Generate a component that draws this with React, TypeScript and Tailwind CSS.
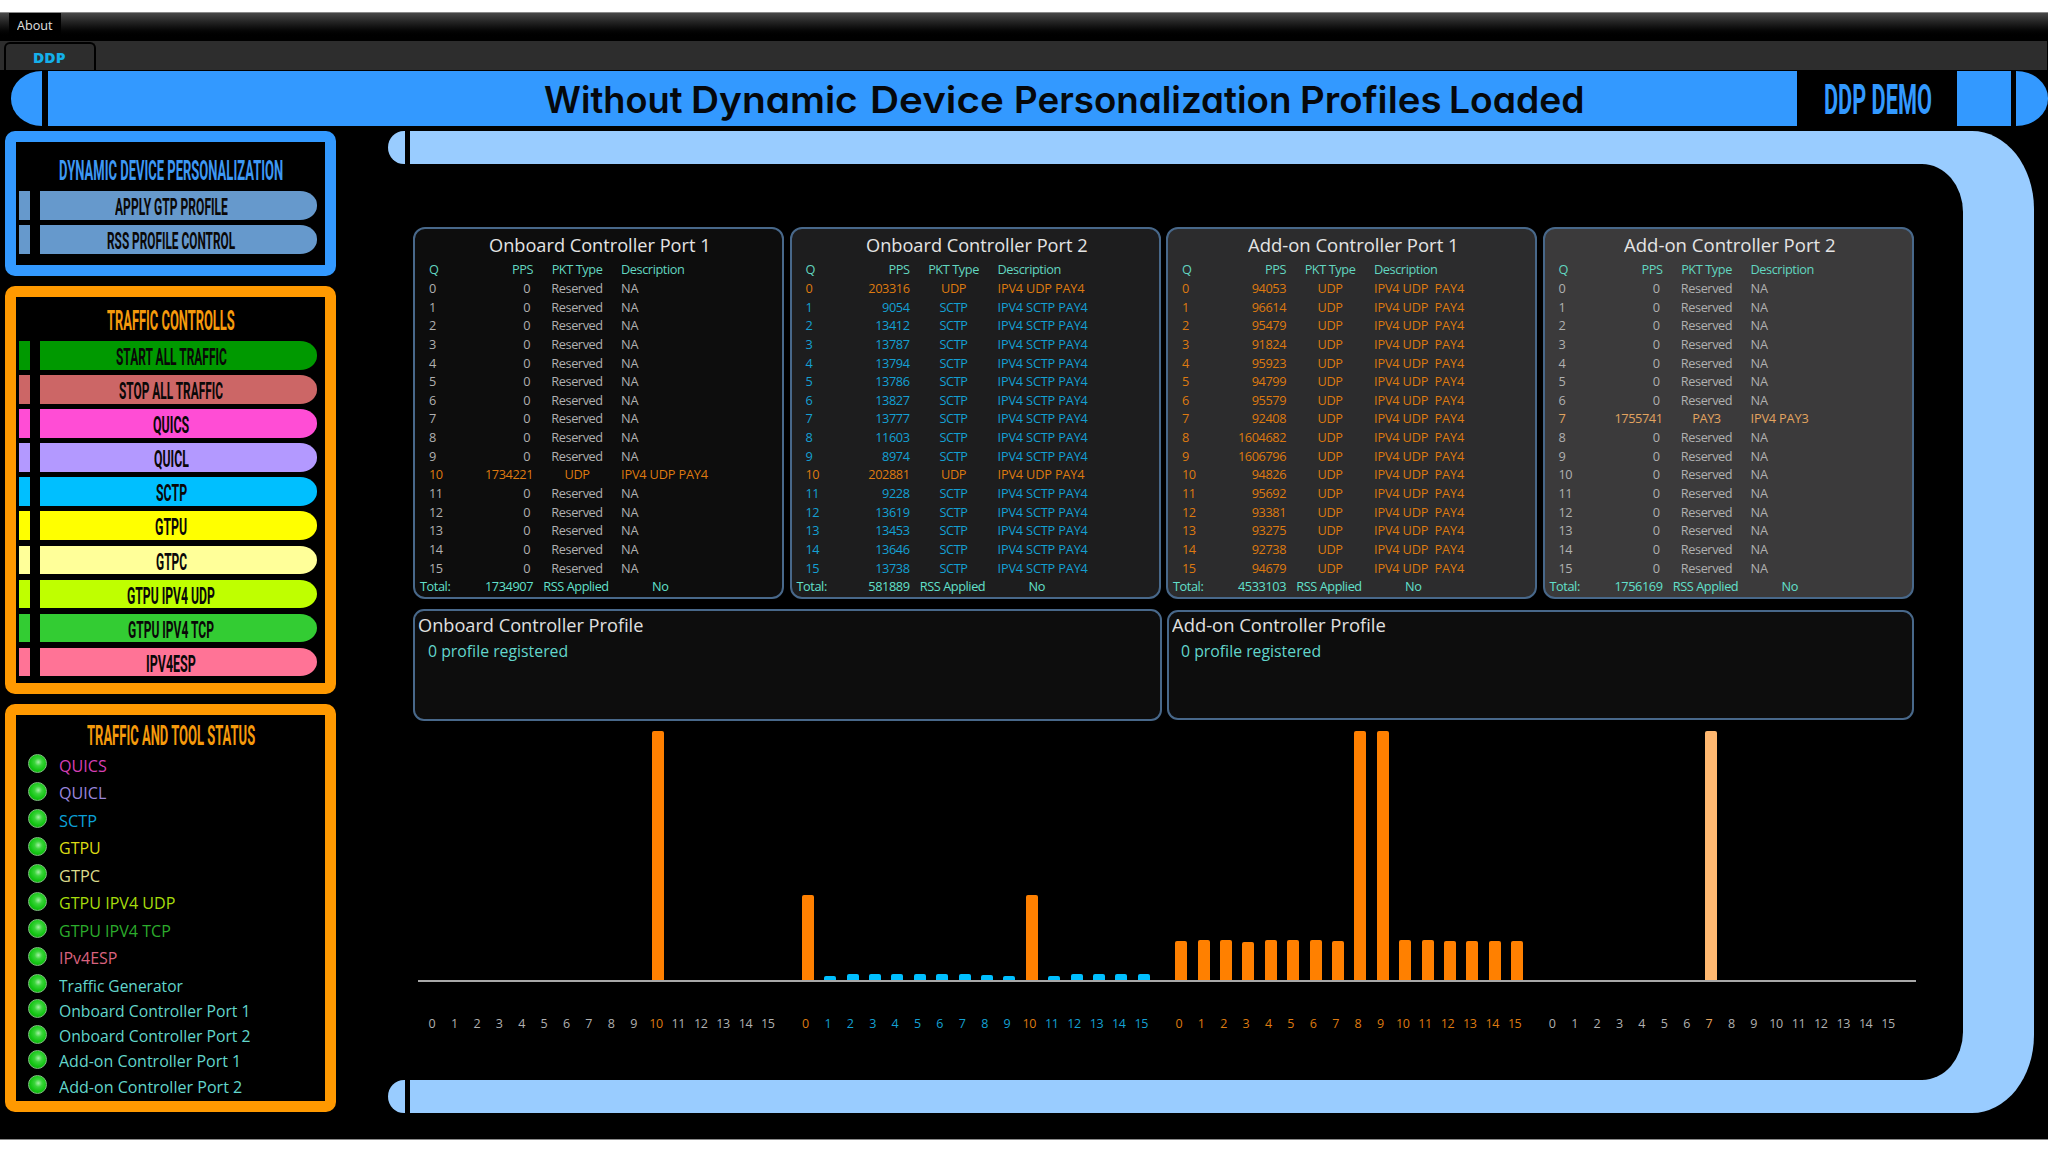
import { useLayoutEffect, useRef, useState } from 'react';
import type { ReactNode } from 'react';
import clsx from 'clsx';

type Kind = 'none' | 'udp' | 'sctp' | 'pay3';

interface Queue {
  pps: number;
  kind: Kind;
}

interface Port {
  name: string;
  nameWidth: number;
  bg: string;
  total: number;
  udpLabel: string;
  queues: Queue[];
}

const textColor: Record<Kind, string> = {
  none: 'text-[#b0b0b0]',
  udp: 'text-[#de7a10]',
  sctp: 'text-[#14a0d4]',
  pay3: 'text-[#e2a460]',
};

const barColor: Record<Kind, string> = {
  none: 'bg-transparent',
  udp: 'bg-[#ff8000]',
  sctp: 'bg-[#00bfff]',
  pay3: 'bg-[#ffb870]',
};

const idle = (): Queue[] => Array.from({ length: 16 }, () => ({ pps: 0, kind: 'none' as Kind }));

const withQueue = (index: number, queue: Queue) => idle().map((q, i) => (i === index ? queue : q));

const ports: Port[] = [
  {
    name: 'Onboard Controller Port 1',
    nameWidth: 222,
    bg: 'bg-[#0d0d0d]',
    total: 1734907,
    udpLabel: 'IPV4 UDP PAY4',
    queues: withQueue(10, { pps: 1734221, kind: 'udp' }),
  },
  {
    name: 'Onboard Controller Port 2',
    nameWidth: 222,
    bg: 'bg-[#1d1d1e]',
    total: 581889,
    udpLabel: 'IPV4 UDP PAY4',
    queues: [
      203316, 9054, 13412, 13787, 13794, 13786, 13827, 13777, 11603, 8974, 202881, 9228, 13619, 13453, 13646, 13738,
    ].map((pps) => ({ pps, kind: pps > 200000 ? 'udp' : 'sctp' })),
  },
  {
    name: 'Add-on Controller Port 1',
    nameWidth: 211,
    bg: 'bg-[#2c2c2d]',
    total: 4533103,
    udpLabel: 'IPV4 UDP\u00a0 PAY4',
    queues: [
      94053, 96614, 95479, 91824, 95923, 94799, 95579, 92408, 1604682, 1606796, 94826, 95692, 93381, 93275, 92738,
      94679,
    ].map((pps) => ({ pps, kind: 'udp' })),
  },
  {
    name: 'Add-on Controller Port 2',
    nameWidth: 212,
    bg: 'bg-[#3b3a3b]',
    total: 1756169,
    udpLabel: 'IPV4 UDP PAY4',
    queues: withQueue(7, { pps: 1755741, kind: 'pay3' }),
  },
];

const headline = [
  { word: 'Without', width: 138, gap: 'ml-0' },
  { word: 'Dynamic', width: 167, gap: 'ml-[8.5px]' },
  { word: 'Device', width: 134, gap: 'ml-[12px]' },
  { word: 'Personalization', width: 277, gap: 'ml-[10px]' },
  { word: 'Profiles', width: 141, gap: 'ml-[9.5px]' },
  { word: 'Loaded', width: 136, gap: 'ml-[8px]' },
];

const profileButtons = [
  { label: 'APPLY GTP PROFILE', width: 113, color: 'bg-[#6699cc]' },
  { label: 'RSS PROFILE CONTROL', width: 128, color: 'bg-[#6699cc]' },
];

const trafficButtons = [
  { label: 'START ALL TRAFFIC', width: 111, color: 'bg-[#009900]' },
  { label: 'STOP ALL TRAFFIC', width: 104, color: 'bg-[#cc6666]' },
  { label: 'QUICS', width: 36, color: 'bg-[#ff4dd5]' },
  { label: 'QUICL', width: 35, color: 'bg-[#b399ff]' },
  { label: 'SCTP', width: 31, color: 'bg-[#00bfff]' },
  { label: 'GTPU', width: 32, color: 'bg-[#ffff00]' },
  { label: 'GTPC', width: 31, color: 'bg-[#ffff99]' },
  { label: 'GTPU IPV4 UDP', width: 88, color: 'bg-[#bfff00]' },
  { label: 'GTPU IPV4 TCP', width: 86, color: 'bg-[#33cc33]' },
  { label: 'IPV4ESP', width: 50, color: 'bg-[#ff7396]' },
];

const statuses = [
  { label: 'QUICS', width: 48, color: 'text-[#d63fb4]' },
  { label: 'QUICL', width: 47, color: 'text-[#9a86dc]' },
  { label: 'SCTP', width: 38, color: 'text-[#0ca0d8]' },
  { label: 'GTPU', width: 42, color: 'text-[#dcdc14]' },
  { label: 'GTPC', width: 41, color: 'text-[#dcdc8c]' },
  { label: 'GTPU IPV4 UDP', width: 116, color: 'text-[#a6dc0c]' },
  { label: 'GTPU IPV4 TCP', width: 112, color: 'text-[#2cac2c]' },
  { label: 'IPv4ESP', width: 58, color: 'text-[#d8627e]' },
  { label: 'Traffic Generator', width: 124, color: 'text-[#62d6cc]' },
  { label: 'Onboard Controller Port 1', width: 192, color: 'text-[#62d6cc]' },
  { label: 'Onboard Controller Port 2', width: 192, color: 'text-[#62d6cc]' },
  { label: 'Add-on Controller Port 1', width: 182, color: 'text-[#62d6cc]' },
  { label: 'Add-on Controller Port 2', width: 183, color: 'text-[#62d6cc]' },
];

// Squeezes or stretches one line of text to a fixed width
function Fit({ width, className, children }: { width: number; className?: string; children: ReactNode }) {
  const ref = useRef<HTMLSpanElement>(null);
  const [scale, setScale] = useState(1);

  useLayoutEffect(() => {
    if (ref.current) setScale(width / ref.current.offsetWidth);
  }, [width]);

  return (
    <span className={clsx('block whitespace-nowrap', className)} style={{ width }}>
      <span ref={ref} className="inline-block origin-left" style={{ transform: `scaleX(${scale})` }}>
        {children}
      </span>
    </span>
  );
}

function PillButton({ label, width, color }: { label: string; width: number; color: string }) {
  return (
    <button className="relative flex h-[28.5px] w-[298px] gap-2.5">
      <span className={clsx('w-[11px]', color)} />
      <span className={clsx('flex-1 rounded-r-[17px_14px]', color)} />
      <span className="absolute inset-0 right-[-6px] top-[5px] flex items-center justify-center">
        <Fit width={width} className="font-['Roboto'] text-[23.5px] leading-none font-bold text-[#0a0808]">
          {label}
        </Fit>
      </span>
    </button>
  );
}

function SidePanel({
  title,
  titleWidth,
  className,
  children,
}: {
  title: string;
  titleWidth: number;
  className: string;
  children: ReactNode;
}) {
  return (
    <section className={clsx('flex flex-col rounded-[10px] border-[11px] bg-black', className)}>
      <Fit width={titleWidth} className="mx-auto font-['Roboto'] text-[27px] leading-[28px] font-bold">
        {title}
      </Fit>
      {children}
    </section>
  );
}

function Led() {
  return (
    <span className="block h-[19px] w-[19px] rounded-full border border-[#7fc47f] bg-[radial-gradient(circle_at_55%_42%,#a4f0a4_0%,#3ad43a_28%,#12c412_60%,#0f9c0f_100%)]" />
  );
}

const gridCols = 'grid h-[18.67px] grid-cols-[50px_54px_88px_1fr] items-center pl-[14px]';

function PortPanel({ port }: { port: Port }) {
  const describe = (kind: Kind) => {
    if (kind === 'udp') return ['UDP', port.udpLabel];
    if (kind === 'sctp') return ['SCTP', 'IPV4 SCTP PAY4'];
    if (kind === 'pay3') return ['PAY3', 'IPV4 PAY3'];
    return ['Reserved', 'NA'];
  };

  return (
    <section
      className={clsx(
        'h-[372px] w-[371px] rounded-[12px] border-2 border-[#48688a] text-[12.75px] leading-[18px] tracking-[-0.43px]',
        port.bg,
      )}
    >
      <h2 className="flex h-[30.9px] items-center justify-center pt-px pl-[3px] text-[19px] tracking-normal text-[#e4e4e4]">
        <Fit width={port.nameWidth}>{port.name}</Fit>
      </h2>
      <div className={clsx(gridCols, 'text-[#62d6c0]')}>
        <span>Q</span>
        <span className="text-right">PPS</span>
        <span className="text-center">PKT Type</span>
        <span>Description</span>
      </div>
      {port.queues.map((q, i) => {
        const [type, description] = describe(q.kind);
        return (
          <div key={i} className={clsx(gridCols, textColor[q.kind])}>
            <span>{i}</span>
            <span className={clsx('text-right', q.pps === 0 && 'pr-[3px]')}>{q.pps}</span>
            <span className="text-center">{type}</span>
            <span className="tracking-[-0.17px]">{description}</span>
          </div>
        );
      })}
      <div className={clsx(gridCols, 'text-[#62e0cc]')}>
        <span className="-ml-[9px]">Total:</span>
        <span className="text-right">{port.total}</span>
        <span className="-ml-[2px] text-center">RSS Applied</span>
        <span className="pl-[31px]">No</span>
      </div>
    </section>
  );
}

function ProfilePanel({ title, titleWidth, className }: { title: string; titleWidth: number; className: string }) {
  return (
    <section className={clsx('rounded-[11px] border-2 border-[#48688a] bg-[#0d0d0d]', className)}>
      <Fit width={titleWidth} className="ml-[3px] text-[18.5px] text-[#e0e0e0]">
        {title}
      </Fit>
      <Fit width={140} className="ml-[12.5px] text-[16.5px] leading-[25px] text-[#62d6cc]">
        0 profile registered
      </Fit>
    </section>
  );
}

function Chart() {
  return (
    <section className="mt-[9px]">
      <div className="ml-[5px] box-content flex h-[250px] w-[1487.5px] items-end gap-[15px] border-b-2 border-[#a8a8a8] pl-[10.5px]">
        {ports.map((port) => (
          <div key={port.name} className="flex w-[358.4px] shrink-0 items-end">
            {port.queues.map((q, i) => (
              <div key={i} className="w-[22.4px]">
                <div
                  className={clsx('w-3 rounded-t-[2px]', barColor[q.kind])}
                  style={{ height: Math.min(249, q.pps * 0.000417) }}
                />
              </div>
            ))}
          </div>
        ))}
      </div>
      <div className="mt-[32px] flex gap-[15px] pl-[7.8px] text-[12.5px] leading-[20px] tracking-[-0.4px]">
        {ports.map((port) => (
          <div key={port.name} className="flex w-[358.4px] shrink-0">
            {port.queues.map((q, i) => (
              <span key={i} className={clsx('w-[22.4px] text-center', textColor[q.kind])}>
                {i}
              </span>
            ))}
          </div>
        ))}
      </div>
    </section>
  );
}

export default function App() {
  return (
    <div className="h-[1152px] w-[2048px] overflow-hidden bg-white pt-3 font-['Open_Sans','Noto_Sans',sans-serif]">
      <div className="flex h-[1128px] flex-col border-y border-[#8a8a8a] bg-black">
        {/* Menu bar */}
        <nav className="flex h-[28px] bg-linear-to-b from-[#484848] to-black to-90% pl-[9px]">
          <button className="flex h-[23px] w-[52px] items-center justify-center bg-black pt-[2px] text-[13px] text-[#e0e0e0]">
            <Fit width={36}>About</Fit>
          </button>
        </nav>

        {/* Tabs */}
        <div className="mr-px flex h-[29px] items-end bg-[#2d2d2d] pl-[4px]">
          <div className="flex h-[28px] w-[92px] items-center justify-center rounded-t-[6px] border-2 border-b-0 border-black bg-[#2d2d2d] pr-[3px] text-[14px] font-extrabold text-[#14b0ea]">
            <Fit width={32}>DDP</Fit>
          </div>
        </div>

        {/* Title bar */}
        <header className="mt-px flex h-[55px] shrink-0 pl-[11px]">
          <div className="w-[31px] rounded-l-[31px_27px] bg-[#3399ff]" />
          <h1 className="ml-[6px] flex w-[1749px] items-center bg-[#3399ff] pt-[2px] pl-[496px] font-['Inter'] text-[37px] leading-none font-semibold text-[#05080c] [font-feature-settings:'cv11']">
            {headline.map(({ word, width, gap }) => (
              <Fit key={word} width={width} className={gap}>
                {word}
              </Fit>
            ))}
          </h1>
          <div className="flex w-[160px] items-center pt-px pl-[27px]">
            <Fit width={108} className="font-['Roboto'] text-[43px] leading-none font-bold text-[#3399ff]">
              DDP DEMO
            </Fit>
          </div>
          <div className="w-[54px] bg-[#3399ff]" />
          <div className="ml-[5px] w-[32px] rounded-r-[32px_27px] bg-[#3399ff]" />
        </header>

        <div className="mt-[5px] flex pl-[5px]">
          {/* Controls and status */}
          <aside className="flex w-[331px] flex-col gap-[10px]">
            <SidePanel
              title="DYNAMIC DEVICE PERSONALIZATION"
              titleWidth={224}
              className="h-[145px] border-[#3399ff] pt-[15px] text-[#3d98f4]"
            >
              <div className="mt-[6px] flex flex-col gap-[5.5px] pl-[3px]">
                {profileButtons.map((b) => (
                  <PillButton key={b.label} {...b} />
                ))}
              </div>
            </SidePanel>

            <SidePanel
              title="TRAFFIC CONTROLLS"
              titleWidth={128}
              className="h-[408px] border-[#ff9900] pt-[10px] text-[#f59a0c]"
            >
              <div className="mt-[6px] flex flex-col gap-[5.6px] pl-[3px]">
                {trafficButtons.map((b) => (
                  <PillButton key={b.label} {...b} />
                ))}
              </div>
            </SidePanel>

            <SidePanel
              title="TRAFFIC AND TOOL STATUS"
              titleWidth={168}
              className="h-[408px] border-[#ff9900] pt-[7px] text-[#f59a0c]"
            >
              <ul className="pl-[12px]">
                {statuses.map((s, i) => (
                  <li key={s.label} className={clsx('flex items-start', i < 8 ? 'h-[27.5px]' : 'h-[25.25px]')}>
                    <span className="pt-[4px]">
                      <Led />
                    </span>
                    <Fit width={s.width} className={clsx('ml-[11.5px] pt-[3.5px] text-[16.8px] leading-6', s.color)}>
                      {s.label}
                    </Fit>
                  </li>
                ))}
              </ul>
            </SidePanel>
          </aside>

          {/* Frame end caps */}
          <div className="ml-[52px] flex h-[982px] w-[16.5px] flex-col justify-between">
            <div className="h-[33px] rounded-l-[16px_16.5px] bg-[#99ccff]" />
            <div className="h-[33px] rounded-l-[16px_16.5px] bg-[#99ccff]" />
          </div>

          {/* Main frame */}
          <main className="ml-[5px] h-[982px] w-[1624.5px] rounded-r-[62px_78px] bg-[#99ccff] py-[33px]">
            <div className="h-[916px] w-[1553px] rounded-r-[41px_48px] bg-black pt-[63px] pl-[3.5px]">
              <div className="flex gap-[5.5px]">
                {ports.map((port) => (
                  <PortPanel key={port.name} port={port} />
                ))}
              </div>
              <div className="mt-[10px] flex items-center gap-[5px]">
                <ProfilePanel
                  title="Onboard Controller Profile"
                  titleWidth={225}
                  className="h-[112px] w-[748.5px] leading-[27px]"
                />
                <ProfilePanel
                  title="Add-on Controller Profile"
                  titleWidth={214}
                  className="h-[110px] w-[747px] leading-[26px]"
                />
              </div>
              <Chart />
            </div>
          </main>
        </div>
      </div>
    </div>
  );
}
